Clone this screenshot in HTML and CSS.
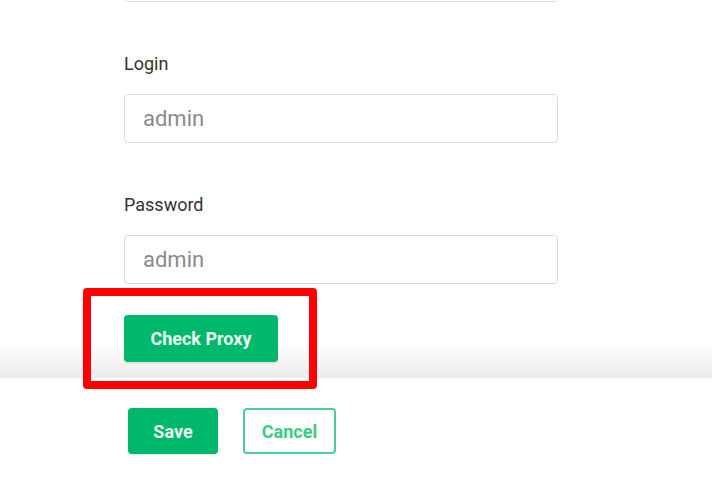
FILE: index.html
```html
<!DOCTYPE html>
<html lang="en">
<head>
    <meta charset="UTF-8">
    <meta name="viewport" content="width=device-width, initial-scale=1.0">
    <title>Proxy Settings</title>
    <link rel="stylesheet" href="styles.css">
</head>
<body>
    <div class="content">
        <div class="field field-cut">
            <input type="text" class="input" placeholder="">
        </div>
        <div class="field">
            <label class="label" for="login">Login</label>
            <input type="text" id="login" class="input" placeholder="admin">
        </div>
        <div class="field">
            <label class="label" for="password">Password</label>
            <input type="text" id="password" class="input" placeholder="admin">
        </div>
        <div class="highlight">
            <button class="btn btn-primary btn-check">Check Proxy</button>
        </div>
        <div class="fade"></div>
    </div>
    <div class="footer">
        <button class="btn btn-primary btn-save">Save</button>
        <button class="btn btn-outline btn-cancel">Cancel</button>
    </div>
</body>
</html>
```

FILE: styles.css
```css
body {
    margin: 0;
    font-family: Roboto, 'Liberation Sans', sans-serif;
    background: #fff;
    color: #333;
    overflow: hidden;
}
.content {
    display: flow-root;
    position: relative;
    height: 378px;
    padding-left: 124px;
    box-sizing: border-box;
}
.field {
    margin-bottom: 50px;
}
.field-cut {
    margin-top: -47px;
}
.label {
    display: block;
    font-size: 18px;
    line-height: 24px;
    color: #333;
    margin-bottom: 18px;
}
.input {
    display: block;
    box-sizing: border-box;
    width: 434px;
    height: 49px;
    padding: 0 18px;
    font-family: Roboto, 'Liberation Sans', sans-serif;
    font-size: 22px;
    color: #333;
    border: 1px solid #dcdcdc;
    border-radius: 4px;
    outline: none;
}
.input::placeholder {
    color: #8a8a8a;
}
.highlight {
    position: relative;
    z-index: 3;
    width: max-content;
    margin-top: -46px;
    margin-left: -41px;
    padding: 19px 31px 19px 33px;
    border: 8px solid #ff0000;
    border-radius: 4px;
}
.fade {
    position: absolute;
    left: 0;
    right: 0;
    bottom: 0;
    height: 36px;
    background: linear-gradient(to bottom, rgba(236, 236, 236, 0), #ebebeb);
    z-index: 1;
}
.btn {
    display: block;
    box-sizing: border-box;
    height: 46px;
    border-radius: 4px;
    font-family: Roboto, 'Liberation Sans', sans-serif;
    font-size: 18px;
    font-weight: bold;
    cursor: pointer;
}
.btn-primary {
    background: #00b86b;
    color: #eafaf2;
    border: none;
    box-shadow: 0 1px 2px rgba(0, 0, 0, 0.12);
}
.btn-check {
    width: 154px;
    height: 47px;
}
.footer {
    position: relative;
    z-index: 2;
    box-sizing: border-box;
    background: #fff;
    display: flex;
    gap: 25px;
    padding: 30px 0 0 128px;
    height: 107px;
}
.btn-save {
    width: 90px;
}
.btn-outline {
    background: #fff;
    color: #3cc98a;
    border: 2px solid #4ccf93;
}
.btn-cancel {
    width: 93px;
}
```
